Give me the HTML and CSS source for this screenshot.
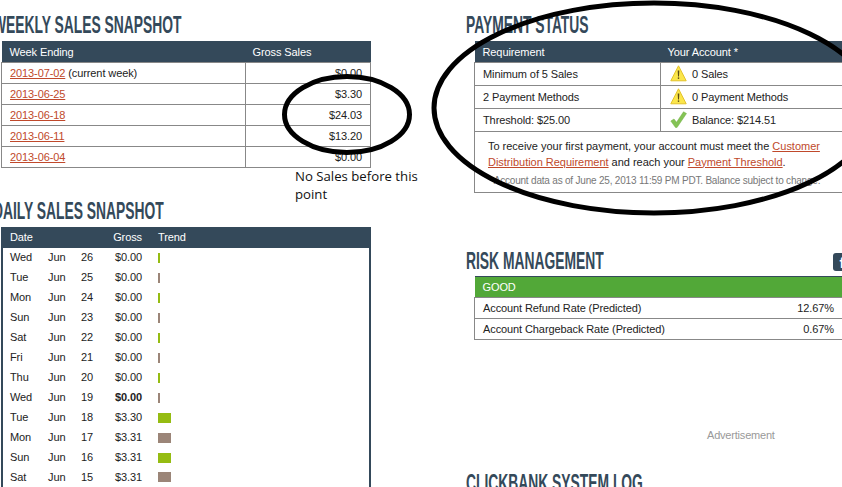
FILE: index.html
```html
<!DOCTYPE html>
<html lang="en">
<head>
<meta charset="utf-8">
<title>Account Dashboard</title>
<link rel="stylesheet" href="styles.css">
</head>
<body>
<div class="page">
  <main class="columns">
    <section class="col col-left">
      <h2 class="title"><span>WEEKLY SALES SNAPSHOT</span></h2>
      <table class="grid weekly">
        <thead><tr><th class="w-a">Week Ending</th><th class="w-b">Gross Sales</th></tr></thead>
        <tbody>
          <tr><td><a href="#">2013-07-02</a> (current week)</td><td class="num">$0.00</td></tr>
          <tr><td><a href="#">2013-06-25</a></td><td class="num">$3.30</td></tr>
          <tr><td><a href="#">2013-06-18</a></td><td class="num">$24.03</td></tr>
          <tr><td><a href="#">2013-06-11</a></td><td class="num">$13.20</td></tr>
          <tr><td><a href="#">2013-06-04</a></td><td class="num">$0.00</td></tr>
        </tbody>
      </table>
      <h2 class="title title-daily"><span>DAILY SALES SNAPSHOT</span></h2>
      <table class="daily">
        <thead><tr><th class="d-day">Date</th><th class="d-mon"></th><th class="d-num"></th><th class="d-gross">Gross</th><th class="d-trend">Trend</th></tr></thead>
        <tbody>
          <tr><td>Wed</td><td>Jun</td><td>26</td><td>$0.00</td><td><i class="bar green thin"></i></td></tr>
          <tr><td>Tue</td><td>Jun</td><td>25</td><td>$0.00</td><td><i class="bar taupe thin"></i></td></tr>
          <tr><td>Mon</td><td>Jun</td><td>24</td><td>$0.00</td><td><i class="bar green thin"></i></td></tr>
          <tr><td>Sun</td><td>Jun</td><td>23</td><td>$0.00</td><td><i class="bar taupe thin"></i></td></tr>
          <tr><td>Sat</td><td>Jun</td><td>22</td><td>$0.00</td><td><i class="bar green thin"></i></td></tr>
          <tr><td>Fri</td><td>Jun</td><td>21</td><td>$0.00</td><td><i class="bar taupe thin"></i></td></tr>
          <tr><td>Thu</td><td>Jun</td><td>20</td><td>$0.00</td><td><i class="bar green thin"></i></td></tr>
          <tr><td>Wed</td><td>Jun</td><td>19</td><td><b>$0.00</b></td><td><i class="bar taupe thin"></i></td></tr>
          <tr><td>Tue</td><td>Jun</td><td>18</td><td>$3.30</td><td><i class="bar green wide"></i></td></tr>
          <tr><td>Mon</td><td>Jun</td><td>17</td><td>$3.31</td><td><i class="bar taupe wide"></i></td></tr>
          <tr><td>Sun</td><td>Jun</td><td>16</td><td>$3.31</td><td><i class="bar green wide"></i></td></tr>
          <tr><td>Sat</td><td>Jun</td><td>15</td><td>$3.31</td><td><i class="bar taupe wide"></i></td></tr>
        </tbody>
      </table>
    </section>
    <section class="col col-right">
      <h2 class="title"><span>PAYMENT STATUS</span></h2>
      <table class="grid payment">
        <thead><tr><th class="p-a">Requirement</th><th class="p-b">Your Account *</th></tr></thead>
        <tbody>
          <tr><td>Minimum of 5 Sales</td><td class="acct"><span class="status"><svg class="ico" viewBox="0 0 17 17"><path d="M8.5 .8 L16.2 15.8 H.8 Z" fill="#fbe64a" stroke="#e3c22a" stroke-width="1" stroke-linejoin="round"/><path d="M7.7 5.5h1.6l-.3 6h-1z" fill="#5a4a14"/><rect x="7.8" y="12.4" width="1.4" height="1.5" fill="#5a4a14"/></svg>0 Sales</span></td></tr>
          <tr><td>2 Payment Methods</td><td class="acct"><span class="status"><svg class="ico" viewBox="0 0 17 17"><path d="M8.5 .8 L16.2 15.8 H.8 Z" fill="#fbe64a" stroke="#e3c22a" stroke-width="1" stroke-linejoin="round"/><path d="M7.7 5.5h1.6l-.3 6h-1z" fill="#5a4a14"/><rect x="7.8" y="12.4" width="1.4" height="1.5" fill="#5a4a14"/></svg>0 Payment Methods</span></td></tr>
          <tr><td>Threshold: $25.00</td><td class="acct"><span class="status"><svg class="ico" viewBox="0 0 17 17"><path d="M.8 10 L4 8 L6.5 11.3 L13.5 .8 L16.5 2.5 L7 16.5 H5.5 Z" fill="#84c355" stroke="#74b047" stroke-width=".5" stroke-linejoin="round"/></svg>Balance: $214.51</span></td></tr>
          <tr><td colspan="2" class="note">
            <p class="note-main">To receive your first payment, your account must meet the <a href="#">Customer Distribution Requirement</a> and reach your <a href="#">Payment Threshold</a>.</p>
            <p class="note-small">* Account data as of June 25, 2013 11:59 PM PDT. Balance subject to change.</p>
          </td></tr>
        </tbody>
      </table>
      <div class="risk-head">
        <h2 class="title"><span>RISK MANAGEMENT</span></h2>
        <span class="fb">f</span>
      </div>
      <table class="grid risk">
        <colgroup><col class="r-a"><col></colgroup>
        <thead><tr><th colspan="2">GOOD</th></tr></thead>
        <tbody>
          <tr><td>Account Refund Rate (Predicted)</td><td class="num">12.67%</td></tr>
          <tr><td>Account Chargeback Rate (Predicted)</td><td class="num">0.67%</td></tr>
        </tbody>
      </table>
      <p class="ad">Advertisement</p>
      <h2 class="title title-log"><span>CLICKBANK SYSTEM LOG</span></h2>
    </section>
  </main>
  <svg class="ink" viewBox="0 0 842 487" aria-hidden="true">
    <ellipse cx="347" cy="114.5" rx="62.5" ry="38" />
    <ellipse cx="654" cy="108" rx="220" ry="105" />
  </svg>
  <p class="scribble">No Sales before this<br>point</p>
</div>
</body>
</html>
```
FILE: styles.css
```css
* { box-sizing: border-box; }
html, body { margin: 0; padding: 0; background: #fff; }
.page { position: relative; width: 842px; height: 487px; overflow: hidden; font: 11px/1 "Liberation Sans", Arial, sans-serif; color: #222; }
.columns { display: flex; align-items: flex-start; gap: 103px; padding-left: 1px; }
.col { width: 370px; flex: none; }
.title { margin: 0 0 0 -8px; height: 41px; padding-top: 12px; font: 700 24.5px/25px "Liberation Sans", Arial, sans-serif; color: #34495a; white-space: nowrap; }
.title span { display: inline-block; transform: scaleX(.565); transform-origin: left center; }
.title-daily { height: 59px; padding-top: 30px; }
table { border-collapse: collapse; width: 370px; table-layout: fixed; letter-spacing: -.1px; }
th { text-align: left; font-weight: 400; color: #fff; background: #34495a; height: 21px; padding: 2px 0 0 8px; }
.grid td { border: 1px solid #888; height: 21px; padding: 2px 9px 0 8px; }
.grid td.num { text-align: right; }
.weekly td.num { padding-right: 8px; }
.w-a { width: 244px; }
.w-b { padding-left: 7px; }
a { color: #c0492b; }
.daily { border: 2px solid #34495a; border-top: 0; }
.daily th { padding: 1px 0 0 7px; }
.daily td { height: 20px; padding: 0 0 0 7px; }
.daily th:nth-child(4), .daily td:nth-child(4) { text-align: right; padding: 0 7px 0 0; }
.daily th:nth-child(5), .daily td:nth-child(5) { padding-left: 9px; }
.d-day { width: 39px; }
.d-mon { width: 33px; }
.d-num { width: 34px; }
.d-gross { width: 41px; }
.bar { display: block; height: 10px; }
.thin { width: 2px; }
.wide { width: 13px; }
.green { background: #95bc12; }
.taupe { background: #9b8578; }
.payment td { height: 23px; }
.p-a { width: 186px; }
.p-b { padding-left: 7px; }
.grid .acct { padding: 0 0 0 9px; }
.status { display: flex; align-items: center; gap: 5px; padding-top: 1px; }
.ico { width: 17px; height: 17px; flex: none; margin-top: -1px; }
.payment .note { height: 61px; padding: 6px 9px 0 13px; vertical-align: top; }
.note-main { margin: 0; line-height: 16px; width: 340px; letter-spacing: -.02px; }
.note-small { margin: 5px 0 0; font-size: 10px; color: #777; line-height: 12px; white-space: nowrap; letter-spacing: -.2px; }
.risk-head { position: relative; margin-top: 55px; height: 28px; }
.risk-head .title { height: 28px; padding-top: 0; }
.fb { position: absolute; left: 359px; top: 5px; width: 18px; height: 18px; border-radius: 3px; background: #34495a; color: #fff; font: 700 15px/20px "Liberation Sans", sans-serif; text-align: center; }
.risk th { background: #52a838; border-top: 1px solid #34495a; padding-top: 1px; }
.r-a { width: 280px; }
.risk td:first-child { border-right: 0; }
.risk td + td { border-left: 0; }
.ad { margin: 90px 0 0 233px; color: #999; font-size: 11px; letter-spacing: -.2px; }
.title-log { margin-top: 20px; height: 30px; padding-top: 9px; }
.ink { position: absolute; left: 0; top: 0; width: 842px; height: 487px; fill: none; stroke: #000; stroke-width: 5; pointer-events: none; }
.scribble { position: absolute; left: 295px; top: 167px; margin: 0; font: 13.2px/18px "Open Sans", sans-serif; color: #111; }
```
